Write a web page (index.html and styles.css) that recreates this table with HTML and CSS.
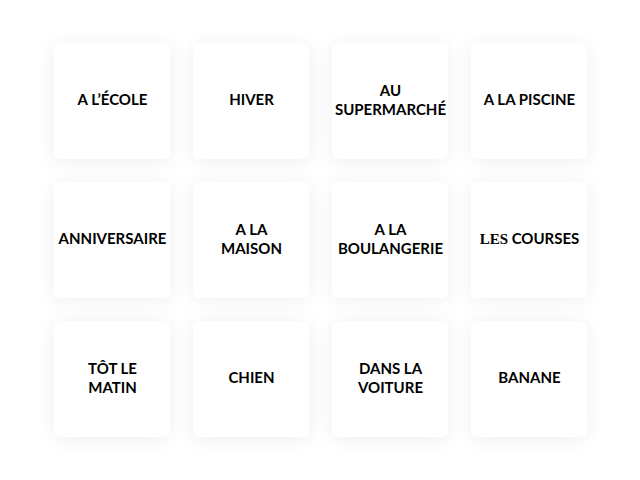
FILE: index.html
```html
<!DOCTYPE html>
<html lang="fr">
<head>
<meta charset="utf-8">
<title>Cartes</title>
<link rel="stylesheet" href="styles.css">
</head>
<body>
<div class="board">
  <div class="card"><span class="label">A L’ÉCOLE</span></div>
  <div class="card"><span class="label">HIVER</span></div>
  <div class="card"><span class="label">AU SUPERMARCHÉ</span></div>
  <div class="card"><span class="label">A LA PISCINE</span></div>
  <div class="card"><span class="label">ANNIVERSAIRE</span></div>
  <div class="card"><span class="label">A LA<br>MAISON</span></div>
  <div class="card"><span class="label">A LA<br>BOULANGERIE</span></div>
  <div class="card"><span class="label"><span class="serif">LES</span> COURSES</span></div>
  <div class="card"><span class="label">TÔT LE<br>MATIN</span></div>
  <div class="card"><span class="label">CHIEN</span></div>
  <div class="card"><span class="label">DANS LA<br>VOITURE</span></div>
  <div class="card"><span class="label">BANANE</span></div>
</div>
</body>
</html>
```

FILE: styles.css
```css
html, body {
  margin: 0;
  padding: 0;
  background: #ffffff;
}

body {
  width: 640px;
  height: 480px;
  display: flex;
  align-items: center;
  justify-content: center;
  font-family: Lato, "Liberation Sans", sans-serif;
}

.board {
  display: grid;
  grid-template-columns: repeat(4, 116px);
  grid-auto-rows: 116px;
  column-gap: 23px;
  row-gap: 23px;
}

.card {
  background: #ffffff;
  border-radius: 6px;
  box-shadow: 0 2px 20px rgba(0, 0, 0, 0.07);
  display: flex;
  align-items: center;
  justify-content: center;
  text-align: center;
  padding: 0 1px 3px 3px;
  box-sizing: border-box;
}

.label {
  font-size: 15px;
  font-weight: 700;
  line-height: 19px;
  color: #000000;
}

.serif {
  font-family: "Liberation Serif", serif;
  font-weight: 700;
}
```
